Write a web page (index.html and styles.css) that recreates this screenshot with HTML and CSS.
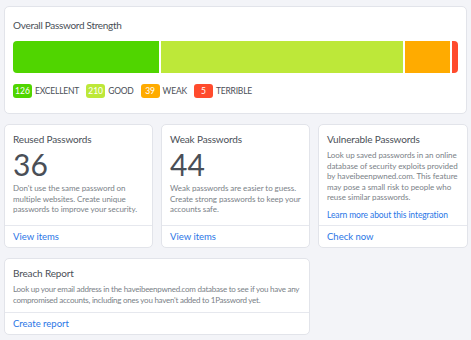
FILE: index.html
```html
<!DOCTYPE html>
<html>
<head>
<meta charset="utf-8">
<link rel="stylesheet" href="styles.css">
</head>
<body>
<div class="page">
  <section class="card strength">
    <h2 class="strength-title">Overall Password Strength</h2>
    <div class="bar">
      <div class="seg excellent" style="flex-grow:126"></div>
      <div class="seg good" style="flex-grow:210"></div>
      <div class="seg weak" style="flex-grow:39"></div>
      <div class="seg terrible" style="flex-grow:5"></div>
    </div>
    <div class="legend">
      <span class="item"><span class="badge excellent">126</span>EXCELLENT</span>
      <span class="item"><span class="badge good">210</span>GOOD</span>
      <span class="item"><span class="badge weak">39</span>WEAK</span>
      <span class="item"><span class="badge terrible">5</span>TERRIBLE</span>
    </div>
  </section>
  <div class="grid">
    <section class="card tile">
      <div class="body">
        <h3>Reused Passwords</h3>
        <div class="num">36</div>
        <p>Don't use the same password on multiple websites. Create unique passwords to improve your security.</p>
      </div>
      <div class="foot"><a>View items</a></div>
    </section>
    <section class="card tile">
      <div class="body">
        <h3>Weak Passwords</h3>
        <div class="num">44</div>
        <p>Weak passwords are easier to guess. Create strong passwords to keep your accounts safe.</p>
      </div>
      <div class="foot"><a>View items</a></div>
    </section>
    <section class="card tile">
      <div class="body">
        <h3>Vulnerable Passwords</h3>
        <p>Look up saved passwords in an online database of security exploits provided by haveibeenpwned.com. This feature may pose a small risk to people who reuse similar passwords.</p>
        <a class="more">Learn more about this integration</a>
      </div>
      <div class="foot"><a>Check now</a></div>
    </section>
    <section class="card tile wide">
      <div class="body">
        <h3>Breach Report</h3>
        <p class="tight">Look up your email address in the haveibeenpwned.com database to see if you have any compromised accounts, including ones you haven't added to 1Password yet.</p>
      </div>
      <div class="foot"><a>Create report</a></div>
    </section>
  </div>
</div>
</body>
</html>
```

FILE: styles.css
```css
* { box-sizing: border-box; }
html, body { margin: 0; padding: 0; }
body {
  background: #f3f4f8;
  font-family: "Lato", "Noto Sans", sans-serif;
  color: #4a5058;
  width: 471px;
  height: 340px;
  overflow: hidden;
}
.page {
  padding: 6px 4px 0 4px;
  display: flex;
  flex-direction: column;
  gap: 10px;
}
.card {
  background: #fff;
  border: 1px solid #e2e4ea;
  border-radius: 5px;
}
.strength {
  padding: 11px 8px 0 8px;
  height: 108px;
}
.strength-title {
  margin: 0;
  font-size: 10px;
  letter-spacing: -0.3px;
  font-weight: 400;
  color: #4a4f57;
  line-height: 15px;
}
.bar {
  margin-top: 8px;
  display: flex;
  gap: 2px;
  height: 32px;
  border-radius: 4px;
  overflow: hidden;
}
.seg { flex-basis: 0; }
.excellent { background: #50d500; }
.good { background: #bde839; }
.weak { background: #ffab00; }
.terrible { background: #ff4b2d; }
.legend {
  margin-top: 11px;
  display: flex;
  gap: 7px;
  font-size: 8.5px;
  letter-spacing: -0.2px;
  color: #4a4f57;
  line-height: 14px;
}
.item { display: flex; align-items: center; gap: 3px; }
.badge {
  color: #fff;
  border-radius: 3px;
  width: 19px;
  text-align: center;
  height: 14px;
  line-height: 14px;
  font-size: 8.5px;
  letter-spacing: 0;
}
.grid {
  display: grid;
  grid-template-columns: 149px 149px 150px;
  column-gap: 8px;
  row-gap: 10px;
}
.tile {
  display: flex;
  flex-direction: column;
  height: 124px;
}
.tile.wide {
  grid-column: 1 / 3;
  height: 77px;
}
.body {
  flex: 1;
  padding: 7px 8px 0 8px;
}
h3 {
  margin: 0;
  font-size: 10px;
  letter-spacing: -0.15px;
  font-weight: 400;
  color: #4a4f57;
  line-height: 15px;
}
.num {
  font-size: 30px;
  line-height: 32px;
  color: #4a4f57;
  margin-top: 1px;
  margin-bottom: 2px;
}
p {
  margin: 3px 0 0 0;
  font-size: 8px;
  letter-spacing: -0.05px;
  line-height: 10.5px;
  color: #7a7f87;
}
p.tight { letter-spacing: -0.25px; }
a {
  color: #2a76e6;
  font-size: 9px;
  line-height: 12px;
}
.more {
  display: block;
  margin-top: 6px;
  font-size: 8.5px;
  letter-spacing: -0.1px;
}
.foot {
  border-top: 1px solid #e6e8ee;
  height: 22px;
  padding: 5px 8px 0 8px;
  font-size: 9.5px;
  line-height: 12px;
}
.foot a { display: block; font-size: 9.5px; }
```
